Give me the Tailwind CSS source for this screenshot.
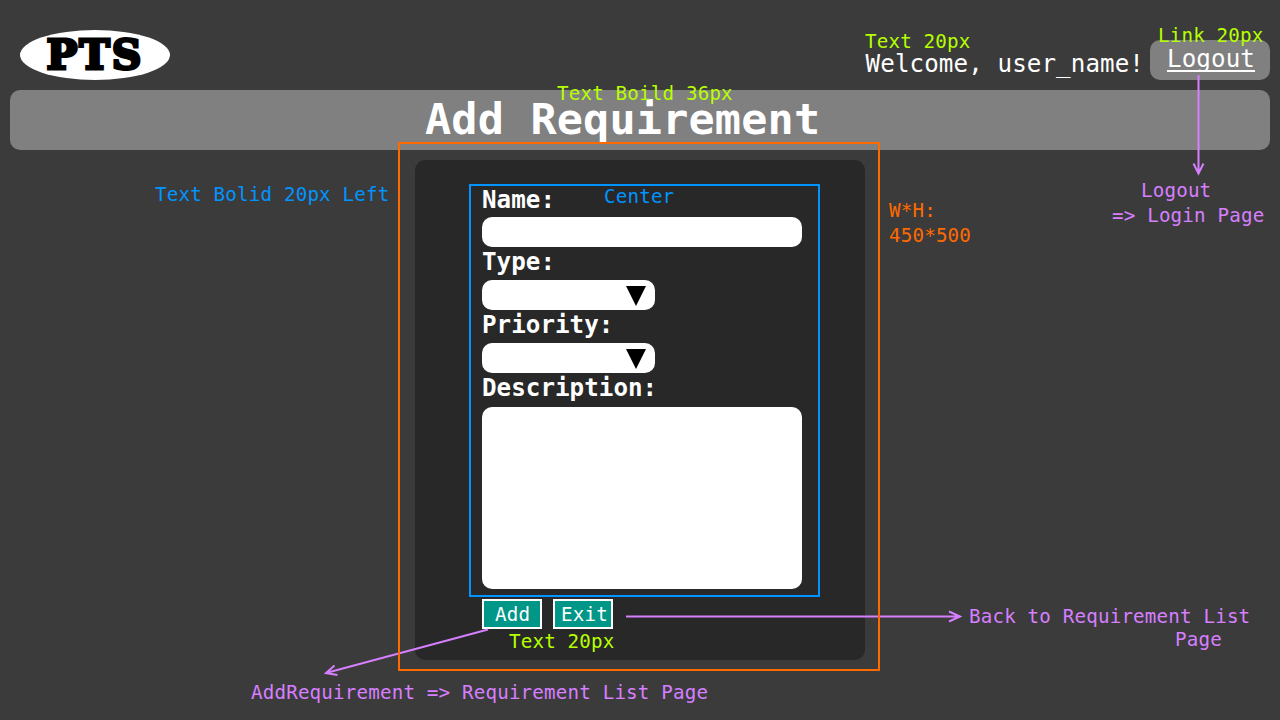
<!DOCTYPE html>
<html lang="en">
<head>
<meta charset="utf-8">
<title>Add Requirement</title>
<script src="https://cdn.jsdelivr.net/npm/@tailwindcss/browser@4"></script>
</head>
<body class="bg-[#3b3b3b]">
<div class="relative flex h-[720px] w-[1280px] flex-col overflow-hidden bg-[#3b3b3b] font-['DejaVu_Sans_Mono',monospace] text-white">

  <header class="flex h-[90px] shrink-0 items-start justify-between pr-2.5 pl-5">
    <div class="mt-[30px] flex h-[50px] w-[150px] items-center justify-center rounded-[50%] bg-white">
      <span class="font-['DejaVu_Serif',serif] text-[41px] leading-[50px] font-bold tracking-[2px] text-black [-webkit-text-stroke:3px_black]">PTS</span>
    </div>
    <div class="mt-10 flex">
      <span class="mr-[6px] block pt-[9px] text-[24.2px] leading-[30px] tracking-[0.09px] whitespace-pre">Welcome, user_name!</span>
      <a class="flex h-10 w-[120px] justify-center rounded-[10px] bg-[#808080] pl-0.5"><span class="mt-1 h-7 border-b-2 border-white text-[24.2px] leading-[30px] tracking-[0.09px]">Logout</span></a>
    </div>
  </header>

  <div class="mx-2.5 h-[60px] shrink-0 rounded-[10px] bg-[#808080] pl-[415px]">
    <h1 class="text-[43.5px] leading-[58px] font-bold tracking-[0.16px] whitespace-pre">Add Requirement</h1>
  </div>

  <main class="mt-2.5 ml-[415px] h-[500px] w-[450px] shrink-0 rounded-[10px] bg-[#282828] pt-[25px] pl-[67px]">
    <label class="block h-8 text-[24.2px] leading-[30px] font-bold tracking-[0.04px]">Name:</label>
    <div class="h-[30px] w-[320px] rounded-[10px] bg-white"></div>
    <label class="block h-[33px] text-[24.2px] leading-[30px] font-bold tracking-[0.04px]">Type:</label>
    <div class="flex h-[30px] w-[173px] justify-end rounded-[10px] bg-white pt-1.5 pr-[9px]">
      <svg class="h-5 w-5" viewBox="0 0 20 20"><path d="M0 0H20L10 20Z"/></svg>
    </div>
    <label class="block h-[33px] text-[24.2px] leading-[30px] font-bold tracking-[0.04px]">Priority:</label>
    <div class="flex h-[30px] w-[173px] justify-end rounded-[10px] bg-white pt-1.5 pr-[9px]">
      <svg class="h-5 w-5" viewBox="0 0 20 20"><path d="M0 0H20L10 20Z"/></svg>
    </div>
    <label class="block h-[34px] text-[24.2px] leading-[30px] font-bold tracking-[0.04px]">Description:</label>
    <div class="h-[182px] w-[320px] rounded-[10px] bg-white"></div>
    <div class="mt-2.5 flex gap-[11px] text-[19.2px] leading-[26px] tracking-[0.17px]">
      <button class="h-[30px] w-[60px] border-2 border-white bg-[#009688] pl-[11px] text-left leading-[28px]">Add</button>
      <button class="h-[30px] w-[60px] border-2 border-white bg-[#009688] pl-1.5 text-left leading-[28px]">Exit</button>
    </div>
  </main>

  <!-- Annotation overlay -->
  <div class="absolute top-[184px] left-[469px] h-[413px] w-[351px] border-2 border-[#0094ff]"></div>
  <svg class="absolute inset-0" width="1280" height="720" viewBox="0 0 1280 720" fill="none" stroke="#d67fff" stroke-width="2">
    <path d="M1198.5 75V173M1193.5 163.500L1198.500 173.500L1203.500 163.500"/>
    <path d="M626 616.500H960M949 611.500L960 616.500L949 621.500"/>
    <path d="M488 629.500L326 673M334.500 665.500L326 673L337.500 675"/>
  </svg>
  <div class="absolute top-[142px] left-[398px] h-[529px] w-[482px] border-2 border-[#ff6a00]"></div>

  <div class="absolute inset-0 text-[19.2px] leading-[20px] tracking-[0.17px] whitespace-pre">
    <div class="text-[#b6ff00]">
      <span class="absolute top-8 left-[865px]">Text 20px</span>
      <span class="absolute top-[26px] left-[1158px]">Link 20px</span>
      <span class="absolute top-[84px] left-[557px]">Text Boild 36px</span>
      <span class="absolute top-[632px] left-[509px]">Text 20px</span>
    </div>
    <div class="text-[#0094ff]">
      <span class="absolute top-[185px] left-[155px]">Text Bolid 20px Left</span>
      <span class="absolute top-[187px] left-[604px]">Center</span>
    </div>
    <div class="text-[#ff6a00]">
      <span class="absolute top-[198px] left-[889px] leading-[25px]">W*H:
450*500</span>
    </div>
    <div class="text-[#d67fff]">
      <span class="absolute top-[181px] left-[1141px]">Logout</span>
      <span class="absolute top-[206px] left-[1112px]">=&gt; Login Page</span>
      <span class="absolute top-[607px] left-[969px]">Back to Requirement List</span>
      <span class="absolute top-[630px] left-[1175px]">Page</span>
      <span class="absolute top-[683px] left-[251px]">AddRequirement =&gt; Requirement List Page</span>
    </div>
  </div>
</div>
</body>
</html>
